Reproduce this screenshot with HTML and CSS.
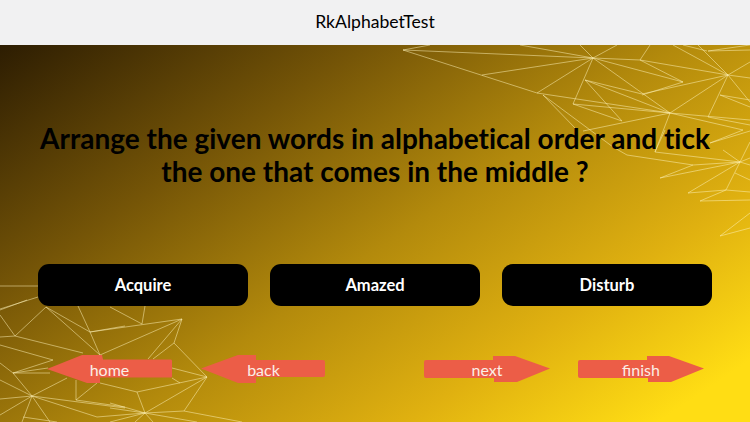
FILE: index.html
```html
<!DOCTYPE html>
<html lang="en">
<head>
<meta charset="utf-8">
<title>RkAlphabetTest</title>
<link rel="stylesheet" href="styles.css">
</head>
<body>
<header class="topbar"><h1 class="title">RkAlphabetTest</h1></header>
<main class="stage">
  <svg class="mesh" viewBox="0 0 750 377" aria-hidden="true">
    <g transform="translate(0,-45)">
      <path d="M430 45L403 50L593 58L520 45M403 50L537 93L593 58L580 45M593 58L617 45M482 75L593 58M593 58L573 104M593 58L670 113M593 58L640 60L650 45M593 58L683 82M640 60L728 75M640 60L683 82M543 95L577 130M537 93L670 113M573 104L670 113L585 80L642 94M585 80L622 121M573 104L622 121M642 94L728 75M642 95L683 82M673 45L728 75M698 45L728 75M683 45L707 51M708 51L750 45M708 51L750 50M728 75L750 62M728 75L750 78M728 75L750 102M728 75L670 113M728 75L708 117M720 95L750 107M720 95L750 100M708 117L750 125M670 113L743 130M670 113L750 120M670 113L583 131M670 113L655 152M743 130L710 143L750 131M613 147L627 155L693 165M665 130L655 152L740 162M693 165L740 162M660 178L740 162M660 178L693 165M688 193L740 162M688 193L726 190L740 162M700 201L726 190M700 201L750 200M726 190L750 192M735 173L750 180M750 142L740 162L750 158M740 162L750 165M723 150L740 162M720 236L750 213M720 236L750 228M543 95L613 147"/>
      <path d="M0 286H38M0 310L27 300M0 309L38 297M0 315L15 336L0 337M15 336L46 307L90 332L78 306M46 307L100 355M90 332L100 355M15 336L83 353M0 345L53 360L13 373M13 373L48 368M13 373H50M0 363L13 373L32 396M0 380L32 396M0 399L32 396M0 415L32 396M32 396L22 422M32 396L67 378M32 396L125 408M32 396L97 417M32 396L50 422M76 380V400L97 383M76 400L125 407M23 417L57 422M97 417L145 413M90 332L125 326M100 355L182 319M110 307L142 324L145 306M90 332L182 319M182 319L174 343L153 359M182 319L148 359M174 343L207 377M172 368L207 377M172 378L180 383M137 392L207 377M137 392L145 413L207 377L184 411L145 413M184 411L242 422M145 413L197 422M145 413L153 422M145 413L135 422M145 413L110 403M145 413L110 408M145 413L110 422M100 383L137 392"/>
    </g>
  </svg>
  <h2 class="question">Arrange the given words in alphabetical order and tick the one that comes in the middle ?</h2>
  <div class="options">
    <button class="option">Acquire</button>
    <button class="option">Amazed</button>
    <button class="option">Disturb</button>
  </div>
  <nav class="nav">
    <div class="nav-group nav-left">
      <a class="arrow home"><svg class="arrow-shape" viewBox="0 0 125 29" aria-hidden="true"><path d="M0 14L35 0H55L56 4.500H124Q125 4.500 125 6V21.500Q125 22.500 124 22.500H53V28H40Z"/></svg><span class="arrow-label">home</span></a>
      <a class="arrow back"><svg class="arrow-shape" viewBox="0 0 125 29" aria-hidden="true"><path d="M0 13.500L37 0H55V5H122Q124 5 124 7V20Q124 22 122 22H55V28H37Z"/></svg><span class="arrow-label">back</span></a>
    </div>
    <div class="nav-group nav-right">
      <a class="arrow next"><svg class="arrow-shape" viewBox="0 0 126 29" aria-hidden="true"><path d="M126 13.500L91 1H69V5H2Q0 5 0 7V21Q0 23 2 23H70V27H93Z"/></svg><span class="arrow-label">next</span></a>
      <a class="arrow finish"><svg class="arrow-shape" viewBox="0 0 126 29" aria-hidden="true"><path d="M126 13.500L91 1H69V5H2Q0 5 0 7V21Q0 23 2 23H70V27H93Z"/></svg><span class="arrow-label">finish</span></a>
    </div>
  </nav>
</main>
</body>
</html>
```
FILE: styles.css
```css
* { box-sizing: border-box; }
html, body { margin: 0; height: 100%; }
body {
  width: 750px;
  height: 422px;
  overflow: hidden;
  font-family: "Lato", "Liberation Sans", sans-serif;
  font-variant-ligatures: none;
  display: flex;
  flex-direction: column;
}
.topbar {
  height: 45px;
  flex: none;
  padding-bottom: 3px;
  background: #f1f1f2;
  display: flex;
  align-items: center;
  justify-content: center;
}
.title {
  margin: 0;
  font-size: 17.6px;
  font-weight: 400;
  color: #000;
}
.stage {
  flex: 1;
  position: relative;
  overflow: hidden;
  padding-top: 77px;
  background: linear-gradient(146deg, #2d1d02 0%, #755507 28%, #b38a0c 52%, #e0b110 74%, #ffdd14 93%);
}
.mesh {
  position: absolute;
  inset: 0;
  width: 100%;
  height: 100%;
  fill: none;
  stroke: rgba(255, 243, 185, 0.68);
  stroke-width: 0.75;
}
.question {
  position: relative;
  margin: 0 auto;
  width: 700px;
  font-size: 28px;
  line-height: 33px;
  font-weight: 700;
  text-align: center;
  color: #000;
}
.options {
  position: relative;
  display: flex;
  justify-content: center;
  gap: 22px;
  margin-top: 76px;
}
.option {
  width: 210px;
  height: 42px;
  border: 0;
  border-radius: 11px;
  background: #000;
  color: #fff;
  font: 700 16.5px "Lato", "Liberation Sans", sans-serif;
  font-variant-ligatures: none;
}
.nav {
  position: relative;
  display: flex;
  justify-content: space-between;
  margin-top: 49px;
  padding: 0 46px 0 47px;
}
.nav-group { display: flex; }
.nav-left { gap: 29px; }
.nav-right { gap: 28px; }
.arrow {
  position: relative;
  display: flex;
  align-items: center;
  height: 29px;
  width: 125px;
  color: #fbeee6;
  font-size: 16px;
  font-variant-ligatures: normal;
}
.next, .finish { width: 126px; }
.arrow-shape {
  position: absolute;
  inset: 0;
  width: 100%;
  height: 100%;
  fill: #ec5d47;
}
.arrow-label {
  position: relative;
  width: 100%;
  text-align: center;
}
```
